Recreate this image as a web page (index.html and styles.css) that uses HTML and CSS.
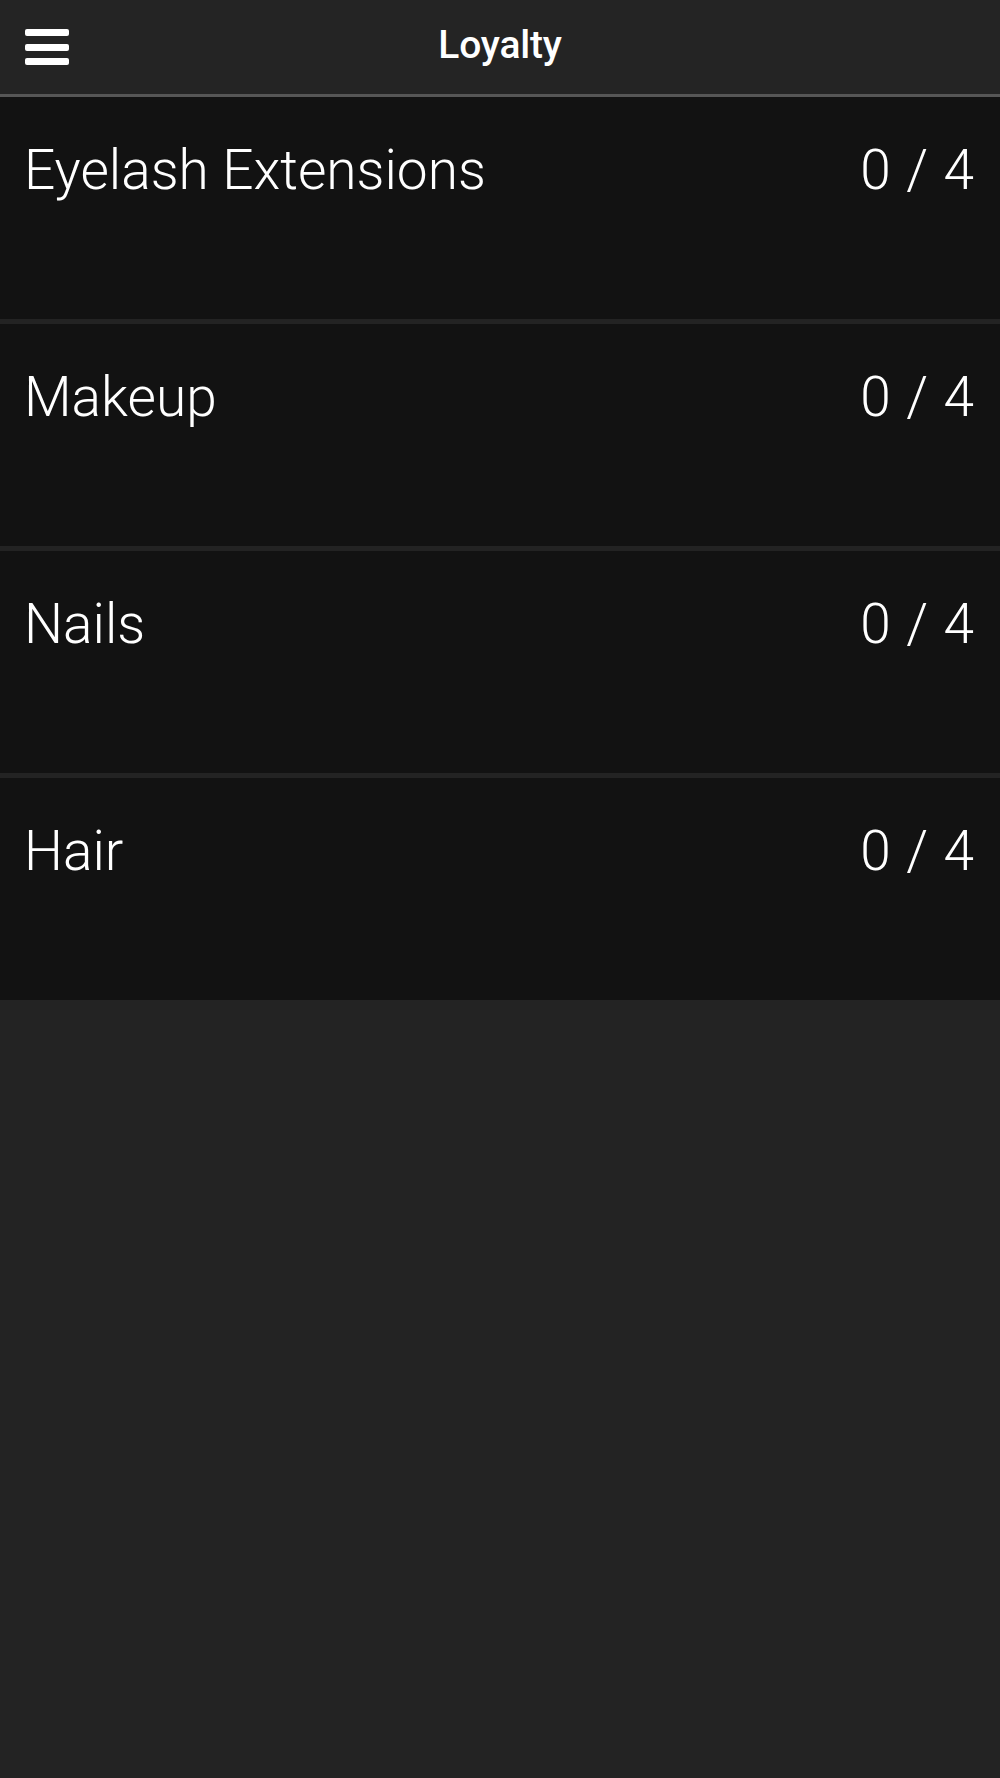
FILE: index.html
```html
<!DOCTYPE html>
<html lang="en">
<head>
<meta charset="utf-8">
<title>Loyalty</title>
<link rel="stylesheet" href="styles.css">
</head>
<body>
<header class="topbar">
  <button class="menu-btn" aria-label="Menu">
    <span class="bar"></span>
    <span class="bar"></span>
    <span class="bar"></span>
  </button>
  <h1 class="title">Loyalty</h1>
</header>
<main class="list">
  <div class="row"><span class="name">Eyelash Extensions</span><span class="count">0 / 4</span></div>
  <div class="row"><span class="name">Makeup</span><span class="count">0 / 4</span></div>
  <div class="row"><span class="name">Nails</span><span class="count">0 / 4</span></div>
  <div class="row"><span class="name">Hair</span><span class="count">0 / 4</span></div>
</main>
</body>
</html>
```

FILE: styles.css
```css
html, body {
  margin: 0;
  padding: 0;
  background: #232323;
}
body {
  font-family: Roboto, "Liberation Sans", sans-serif;
  color: #ffffff;
  min-height: 1778px;
}
.topbar {
  position: relative;
  height: 94px;
  background: #242424;
  border-bottom: 3px solid #565656;
  display: flex;
  align-items: center;
  justify-content: center;
}
.menu-btn {
  position: absolute;
  left: 25px;
  top: 29px;
  width: 44px;
  padding: 0;
  margin: 0;
  border: 0;
  background: none;
  display: flex;
  flex-direction: column;
  gap: 7.5px;
}
.bar {
  display: block;
  height: 7px;
  width: 44px;
  background: #ffffff;
  border-radius: 2px;
}
.title {
  margin: 0;
  font-size: 39px;
  font-weight: 500;
  line-height: 1;
  padding-bottom: 3px;
  letter-spacing: -0.2px;
}
.list {
  display: flex;
  flex-direction: column;
  gap: 5px;
}
.row {
  height: 222px;
  box-sizing: border-box;
  background: #121212;
  display: flex;
  justify-content: space-between;
  align-items: flex-start;
  padding: 46px 26px 0 24px;
  font-size: 55px;
  font-weight: 300;
  line-height: 1;
}
.count {
  word-spacing: 2px;
}
```
